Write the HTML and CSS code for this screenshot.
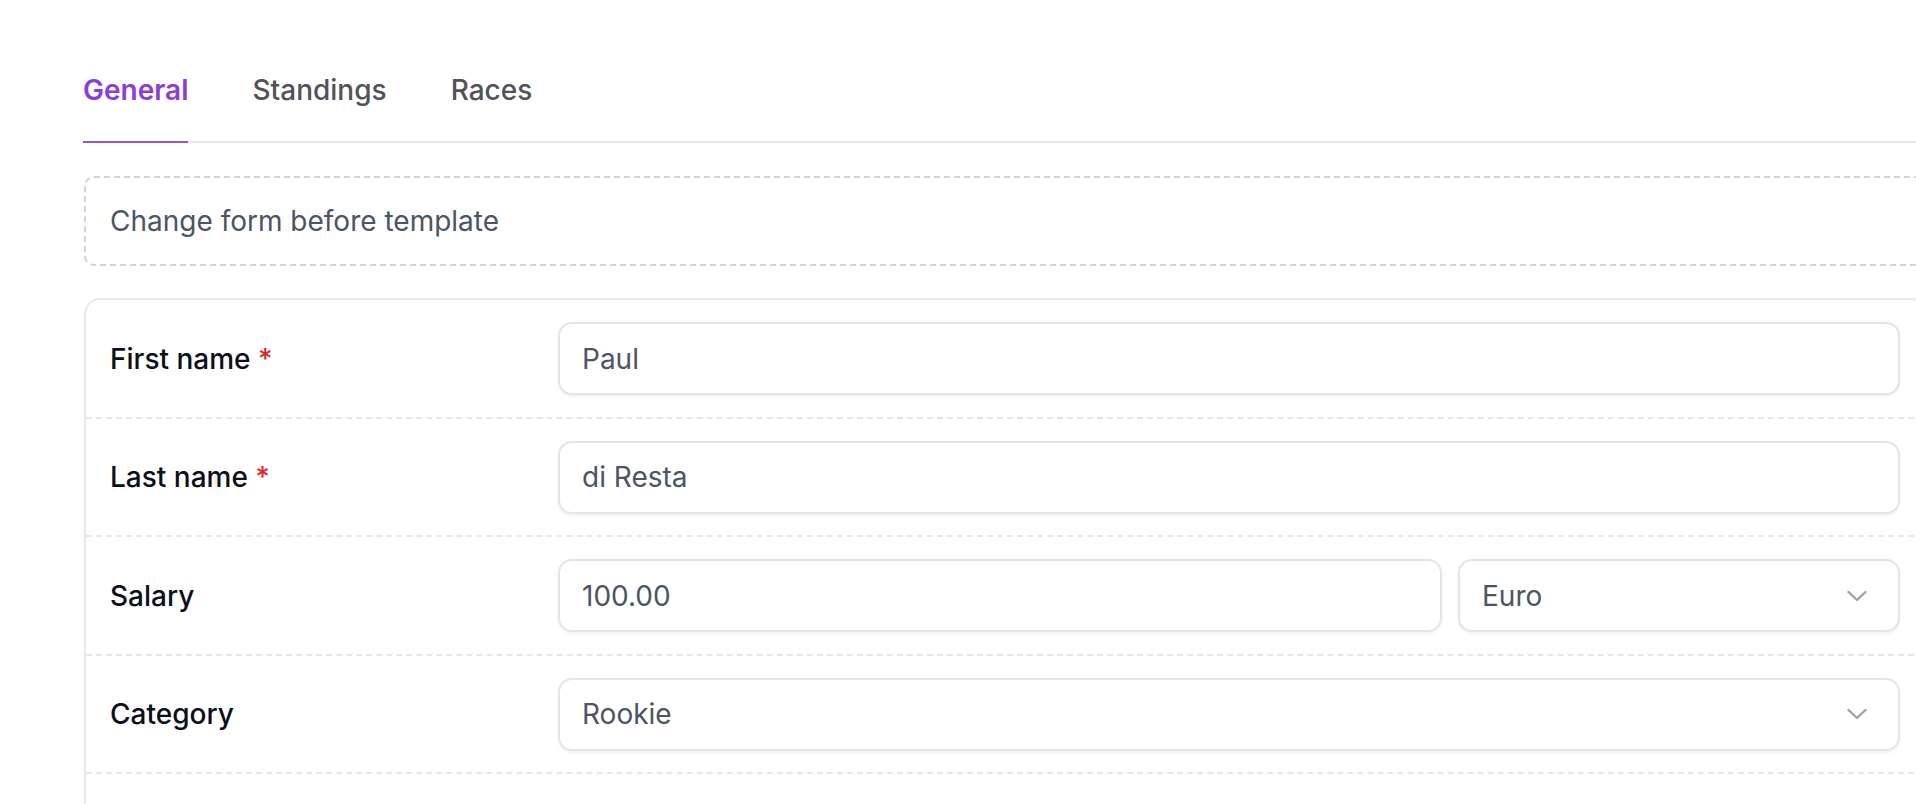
FILE: index.html
```html
<!DOCTYPE html>
<html lang="en">
<head>
<meta charset="utf-8">
<title>Driver</title>
<link rel="stylesheet" href="styles.css">
</head>
<body>
<div class="page">
  <nav class="tabs">
    <span class="tab active">General</span>
    <span class="tab">Standings</span>
    <span class="tab">Races</span>
  </nav>

  <div class="notice">Change form before template</div>

  <div class="card">
    <div class="row">
      <div class="label">First name <span class="req">*</span></div>
      <div class="input">Paul</div>
    </div>
    <div class="row">
      <div class="label">Last name <span class="req">*</span></div>
      <div class="input">di Resta</div>
    </div>
    <div class="row">
      <div class="label">Salary</div>
      <div class="pair">
        <div class="input">100.00</div>
        <div class="input select">
          <span>Euro</span>
          <svg class="chev" width="20" height="20" viewBox="0 0 20 20"><polyline points="1.5,6 10,14 18.5,6" fill="none" stroke="#9ca3af" stroke-width="2.4" stroke-linecap="round" stroke-linejoin="round"/></svg>
        </div>
      </div>
    </div>
    <div class="row">
      <div class="label">Category</div>
      <div class="input select">
        <span>Rookie</span>
        <svg class="chev" width="20" height="20" viewBox="0 0 20 20"><polyline points="1.5,6 10,14 18.5,6" fill="none" stroke="#9ca3af" stroke-width="2.4" stroke-linecap="round" stroke-linejoin="round"/></svg>
      </div>
    </div>
    <div class="row row-empty"></div>
  </div>
</div>
</body>
</html>
```

FILE: styles.css
```css
html, body {
  margin: 0;
  padding: 0;
  overflow: hidden;
  background: #ffffff;
}

body {
  font-family: Inter, "Noto Sans", "Liberation Sans", sans-serif;
  font-size: 28px;
  line-height: 40px;
  color: #111827;
}

.page {
  margin-left: 83px;
  width: 1843px;
}

.tabs {
  display: flex;
  gap: 64px;
  padding-top: 70px;
  box-shadow: inset 0 -2px 0 #e5e7eb;
}

.tab {
  font-size: 28px;
  line-height: 40px;
  font-weight: 500;
  color: #52525b;
  padding-bottom: 31px;
  border-bottom: 2px solid transparent;
}

.tab.active {
  color: #8b3dd9;
  font-weight: 600;
  border-bottom-color: #9256e0;
}

.notice {
  margin-top: 33px;
  margin-left: 1px;
  border: 2px dashed #d4d4d8;
  border-radius: 10px;
  padding: 23px 24px;
  color: #4b5563;
}

.card {
  margin-top: 32px;
  margin-left: 1px;
  border: 2px solid #e8e8ea;
  border-radius: 16px;
}

.row {
  display: grid;
  grid-template-columns: 416px 1fr;
  column-gap: 32px;
  align-items: center;
  padding: 22px 24px 21.5px;
}

.row + .row {
  border-top: 2px dashed #e5e7eb;
}

.row-empty {
  height: 120px;
  box-sizing: border-box;
}

.label {
  font-weight: 500;
  color: #0b0f1a;
}

.req {
  color: #dc2626;
}

.input {
  box-sizing: border-box;
  height: 73px;
  display: flex;
  align-items: center;
  padding: 0 22px;
  border: 2px solid #e5e5e8;
  border-radius: 14px;
  box-shadow: 0 2px 3px rgba(0, 0, 0, 0.05);
  color: #4b5563;
  background: #ffffff;
}

.select {
  justify-content: space-between;
  padding-right: 31px;
}

.chev {
  display: block;
  flex: none;
}

.pair {
  display: grid;
  grid-template-columns: 2fr 1fr;
  column-gap: 16px;
}
```
